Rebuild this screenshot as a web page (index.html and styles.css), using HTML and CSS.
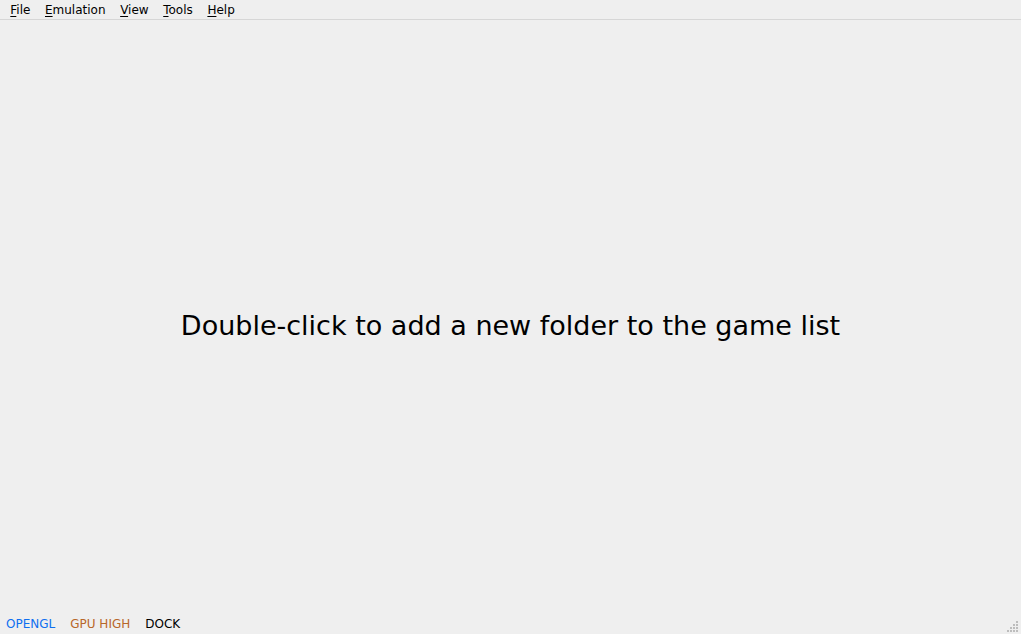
FILE: index.html
```html
<!DOCTYPE html>
<html>
<head>
<meta charset="utf-8">
<link rel="stylesheet" href="styles.css">
</head>
<body>
<div class="window">
  <div class="menubar">
    <span class="menu"><u>F</u>ile</span>
    <span class="menu"><u>E</u>mulation</span>
    <span class="menu"><u>V</u>iew</span>
    <span class="menu"><u>T</u>ools</span>
    <span class="menu"><u>H</u>elp</span>
  </div>
  <div class="main">
    <div class="placeholder">Double-click to add a new folder to the game list</div>
  </div>
  <div class="statusbar">
    <span class="stat opengl">OPENGL</span>
    <span class="stat gpu">GPU HIGH</span>
    <span class="stat dock">DOCK</span>
    <svg class="grip" width="12" height="12" viewBox="0 0 12 12">
      <g fill="#bdbdbd">
        <rect x="9" y="1" width="2" height="2"/>
        <rect x="6" y="4" width="2" height="2"/>
        <rect x="9" y="4" width="2" height="2"/>
        <rect x="3" y="7" width="2" height="2"/>
        <rect x="6" y="7" width="2" height="2"/>
        <rect x="9" y="7" width="2" height="2"/>
        <rect x="0" y="10" width="2" height="2"/>
        <rect x="3" y="10" width="2" height="2"/>
        <rect x="6" y="10" width="2" height="2"/>
        <rect x="9" y="10" width="2" height="2"/>
      </g>
    </svg>
  </div>
</div>
</body>
</html>
```
FILE: styles.css
```css
html, body {
  margin: 0;
  padding: 0;
  height: 100%;
  background: #efefef;
  font-family: "DejaVu Sans", sans-serif;
  color: #000;
}
.window {
  display: flex;
  flex-direction: column;
  height: 634px;
  width: 1021px;
  overflow: hidden;
}
.menubar {
  height: 19px;
  border-bottom: 1px solid #d6d6d6;
  display: flex;
  align-items: center;
  padding-left: 3px;
  font-size: 12px;
  box-sizing: content-box;
}
.menu {
  padding: 1px 7.3px 0;
  line-height: 19px;
}
.menu u {
  text-decoration-thickness: 1px;
  text-underline-offset: 2px;
}
.main {
  flex: 1;
  display: flex;
  align-items: center;
  justify-content: center;
  padding-top: 19px;
}
.placeholder {
  font-size: 27px;
}
.statusbar {
  height: 22px;
  display: flex;
  align-items: center;
  padding-left: 6px;
  padding-top: 2px;
  box-sizing: border-box;
  font-size: 12px;
  position: relative;
}
.stat {
  margin-right: 15px;
  line-height: 20px;
}
.opengl { color: #0f6ff0; }
.gpu { color: #b8672a; }
.dock { color: #000; }
.grip {
  position: absolute;
  right: 2px;
  bottom: 2px;
}
```
